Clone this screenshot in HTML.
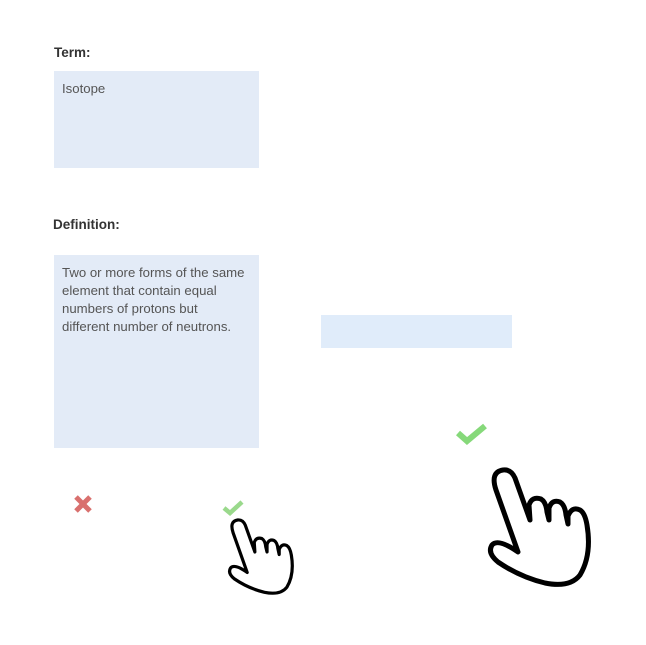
<!DOCTYPE html>
<html><head><meta charset="utf-8"><style>
html,body{margin:0;padding:0;background:#fff;width:646px;height:645px;overflow:hidden;position:relative;font-family:"Liberation Sans",sans-serif}
.lbl{position:absolute;font-weight:bold;font-size:13.5px;color:#333}
.box{position:absolute;background:#e3ebf7}
.txt{position:absolute;font-size:13.2px;color:#555;line-height:18px}
</style></head><body>
<div class="lbl" style="left:54px;top:45px">Term:</div>
<div class="box" style="left:54px;top:71px;width:205px;height:97px"></div>
<div class="txt" style="left:62px;top:80px">Isotope</div>
<div class="lbl" style="left:53px;top:217px">Definition:</div>
<div class="box" style="left:54px;top:255px;width:205px;height:193px"></div>
<div class="txt" style="left:62px;top:264px;width:197px;white-space:nowrap">Two or more forms of the same<br>element that contain equal<br>numbers of protons but<br>different number of neutrons.</div>
<div class="box" style="left:321px;top:315px;width:191px;height:33px;background:#e0ecfa"></div>
<svg width="646" height="645" style="position:absolute;left:0;top:0">
<defs>
<path id="h" d="M518 552 L496 490 Q490 472 503 470 Q511 469 515 478 L530 520 L529 505 Q532 496 541 499 Q546 502 547 512 L549 520 L549 508 Q552 499 560 502 Q565 505 566 515 L568 524 L568 516 Q572 506 580 510 Q585 513 587 525 Q592 555 580 575 Q570 588 545 583 Q520 577 498 562 Q487 553 492 545 Q498 538 518 552 Z" fill="#fff" stroke="#000" stroke-width="5" stroke-linejoin="round"/>
</defs>
<use href="#h"/>
<g transform="translate(228 520) scale(0.64) translate(-488 -470)"><use href="#h"/></g>
<path d="M458 433 L467 441 L485 426" fill="none" stroke="#86d97a" stroke-width="6"/>
<path d="M224 508 L230 513 L242 502" fill="none" stroke="#9ad98c" stroke-width="4.5"/>
<path d="M76 497 L90 511 M90 497 L76 511" stroke="#d9706e" stroke-width="5"/>
</svg>
</body></html>
